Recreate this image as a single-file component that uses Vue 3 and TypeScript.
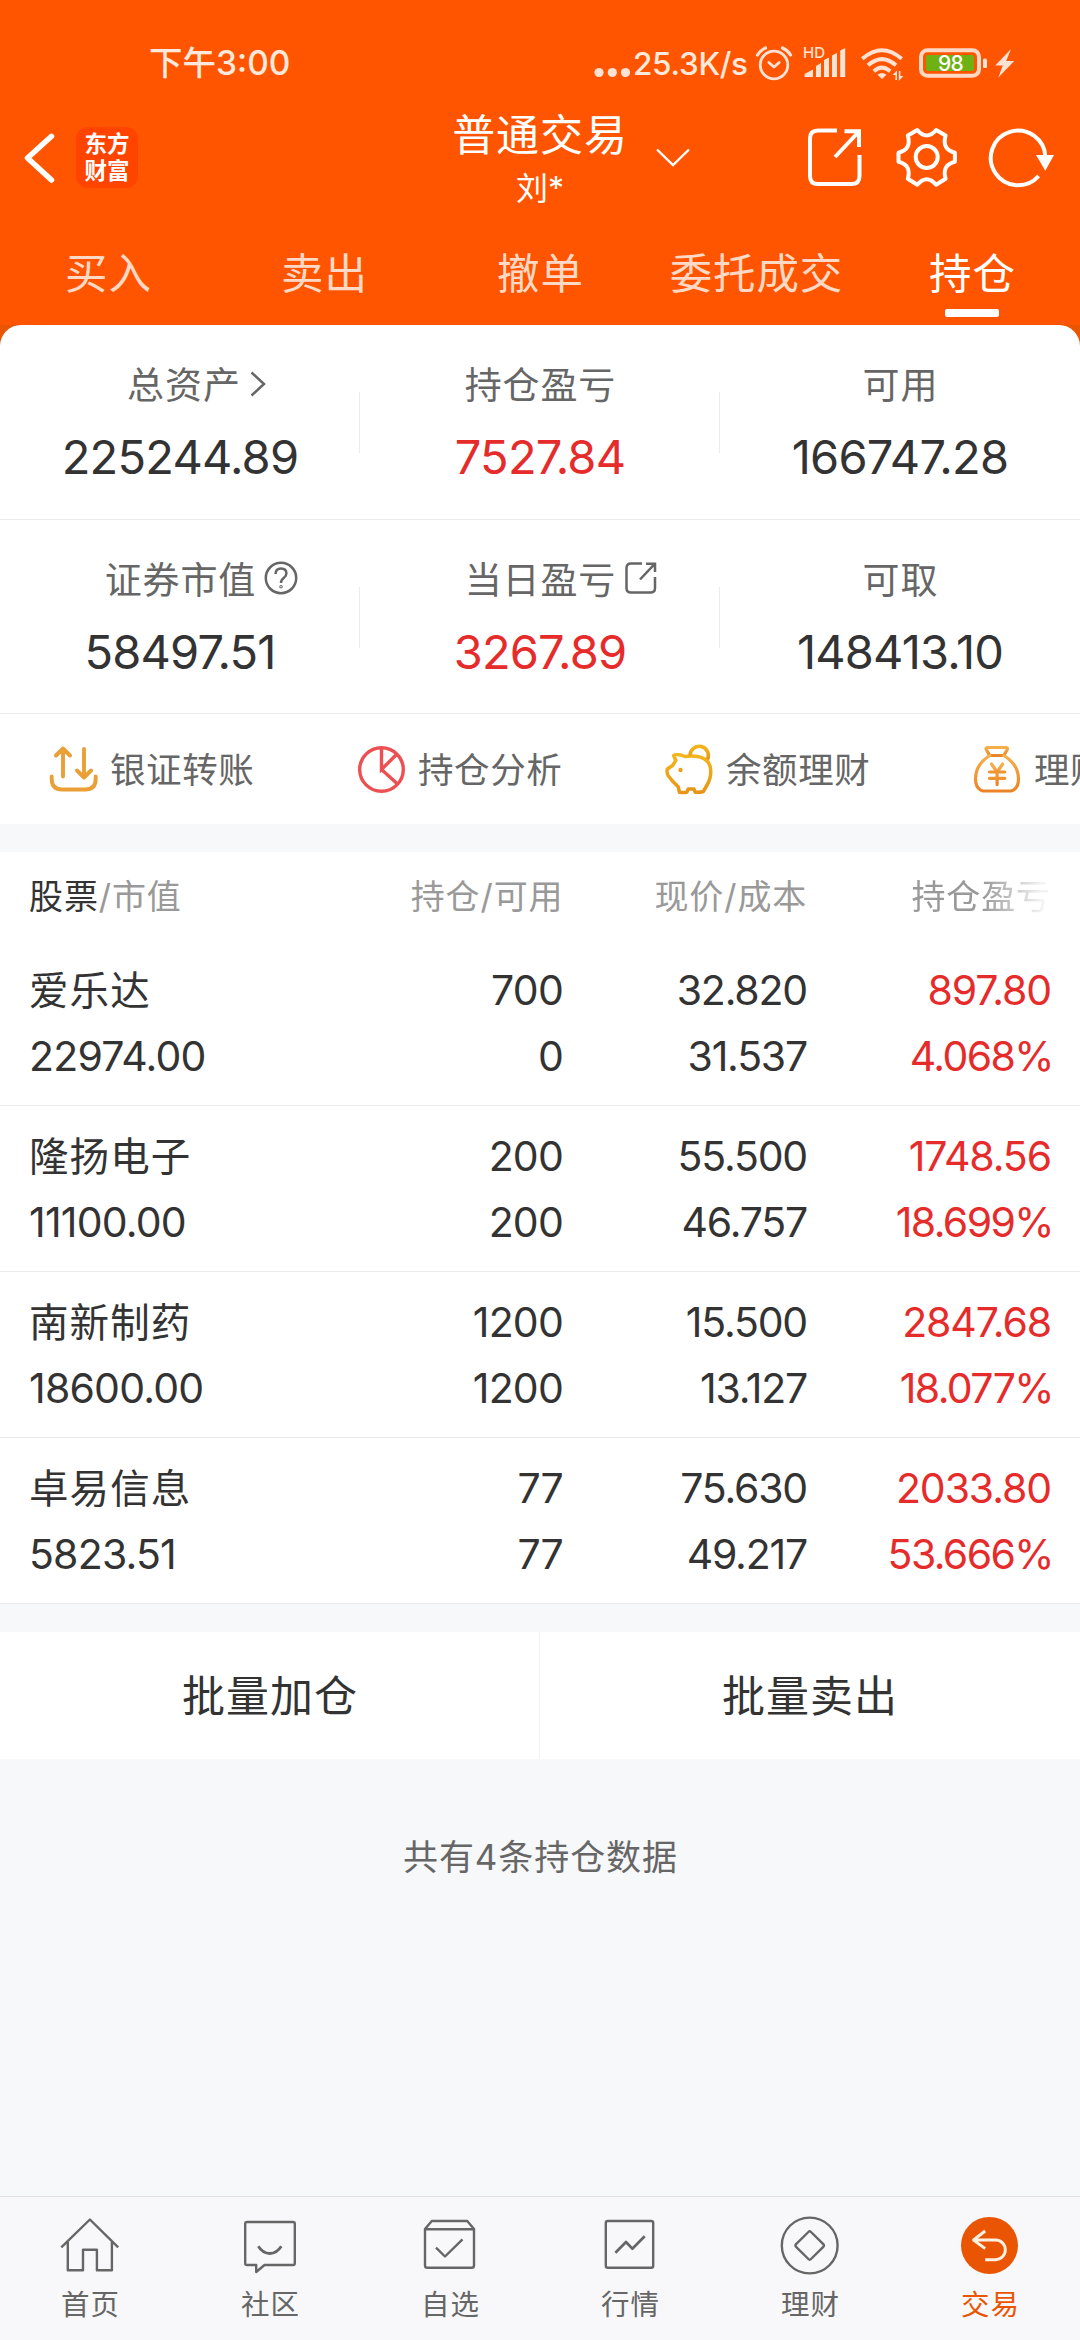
<script setup lang="ts">
interface Stat {
  label: string
  value: string
  icon?: 'chevron' | 'help' | 'export'
  up?: boolean
}

interface Holding {
  name: string
  marketValue: string
  amount: string
  available: string
  price: string
  cost: string
  profit: string
  ratio: string
}

const tabs: string[] = ['买入', '卖出', '撤单', '委托成交', '持仓']
const activeTab = '持仓'

const statRows: Stat[][] = [
  [
    { label: '总资产', value: '225244.89', icon: 'chevron' },
    { label: '持仓盈亏', value: '7527.84', up: true },
    { label: '可用', value: '166747.28' },
  ],
  [
    { label: '证券市值', value: '58497.51', icon: 'help' },
    { label: '当日盈亏', value: '3267.89', icon: 'export', up: true },
    { label: '可取', value: '148413.10' },
  ],
]

const holdings: Holding[] = [
  { name: '爱乐达', marketValue: '22974.00', amount: '700', available: '0', price: '32.820', cost: '31.537', profit: '897.80', ratio: '4.068%' },
  { name: '隆扬电子', marketValue: '11100.00', amount: '200', available: '200', price: '55.500', cost: '46.757', profit: '1748.56', ratio: '18.699%' },
  { name: '南新制药', marketValue: '18600.00', amount: '1200', available: '1200', price: '15.500', cost: '13.127', profit: '2847.68', ratio: '18.077%' },
  { name: '卓易信息', marketValue: '5823.51', amount: '77', available: '77', price: '75.630', cost: '49.217', profit: '2033.80', ratio: '53.666%' },
]
</script>

<template>
  <div class="screen">
    <header class="top">
      <div class="status">
        <span class="clock">下午3:00</span>
        <div class="status-right">
          <svg class="dots" width="36" height="30" viewBox="0 0 36 30"><circle cx="5" cy="23.5" r="4.6" /><circle cx="18.3" cy="23.5" r="4.6" /><circle cx="31.5" cy="23.5" r="4.6" /></svg>
          <span class="speed">25.3K/s</span>
          <svg class="sys" width="276" height="40" viewBox="750 44 276 40">
            <g fill="none" stroke="#ffe2d4" stroke-width="2.8" stroke-linecap="round" stroke-linejoin="round">
              <circle cx="774" cy="65" r="13.8" />
              <path d="M768.8 62.5l5.2 4.5 5.2-4.5" />
              <path d="M757.5 55q3-5 8-7M790.5 55q-3-5-8-7" stroke-width="3.2" />
            </g>
            <text x="803" y="58.3" class="hd">HD</text>
            <g fill="#ffe2d4">
              <path d="M804.5 77v-3l8.5-4.5V77zM816 77V66l5-3v14zM824 77V60l5-2.6V77zM832 77V55.5l5-2.5V77zM840.2 77V50.5l5-2.5V77z" />
              <path d="M882 79l-4.5-4.200q4.500-3.600 9 0zM892.500 75l4.500-4.500V80h-1.600v-5zM898.800 71h1.600v5h3l-4.600 5z" />
              <path d="M1011 49l-15.800 16.500h7.600L998.300 77.500 1014.300 61h-8.100z" />
              <rect x="983" y="58.500" width="4" height="9.500" rx="1.500" />
            </g>
            <g fill="none" stroke="#ffe2d4" stroke-width="3.900">
              <path d="M862.300 58.800q19.700-17.200 39.400 0M868 65.300q14-12.400 28 0M873.800 71.300q8.200-7.400 16.400 0" />
            </g>
            <rect x="921" y="50.200" width="58" height="25.600" rx="6.500" fill="none" stroke="#ffd9c5" stroke-width="4" />
            <rect x="926" y="55" width="48" height="16" rx="2" fill="#6fb012" />
            <text x="950.500" y="70.800" text-anchor="middle" class="bat">98</text>
          </svg>
        </div>
      </div>

      <div class="titlebar">
        <div class="side left">
          <svg width="36" height="56" viewBox="22 130 36 56"><path d="M51.500 136.300L27.500 158l24 22" fill="none" stroke="#fff" stroke-width="5.500" stroke-linecap="round" stroke-linejoin="round" /></svg>
          <div class="logo"><span>东方</span><span>财富</span></div>
        </div>
        <div class="titles">
          <div class="title">普通交易</div>
          <div class="account">刘*</div>
        </div>
        <div class="side right">
          <svg class="down" width="36" height="20" viewBox="0 0 36 20"><path d="M2 2.500l16 15.500 16-15.500" fill="none" stroke="#fff" stroke-width="2.400" /></svg>
          <svg width="270" height="64" viewBox="800 126 270 64" fill="none" stroke="#fff" stroke-width="4">
            <path d="M835 130.500H816q-8 0-8 8V176q0 8 8 8h33.500q8 0 8-8v-21" />
            <path d="M842.500 131.200H857V147M856 132.500l-23 24.500" />
            <circle cx="924.700" cy="157" r="11" />
            <path stroke-linejoin="round" d="M915.300 130q9.400 11 18.800 0l9.500 5.500q-4 14 9.300 17.200v9q-13.300 3.300-9.300 17l-9.500 6q-9.400-11-18.800 0l-9.500-6q4-13.700-9.300-17v-9q13.300-3.200 9.300-17.200z" />
            <path d="M1036.600 176A27.300 27.300 0 1 1 1043.400 157" />
            <path d="M1034 155h18l-8.700 15.800z" fill="#fff" stroke="none" />
          </svg>
        </div>
      </div>

      <nav class="tabs">
        <div v-for="tab in tabs" :key="tab" class="tab" :class="{ active: tab === activeTab }">
          <span>{{ tab }}</span><i v-if="tab === activeTab"></i>
        </div>
      </nav>
    </header>

    <section class="card">
      <div v-for="(row, r) in statRows" :key="r" class="stat-row">
        <div v-for="s in row" :key="s.label" class="stat">
          <div class="stat-label" :class="s.icon">
            <span>{{ s.label }}</span>
            <svg v-if="s.icon === 'chevron'" width="18" height="28" viewBox="0 0 18 28"><path d="M2.500 2.500L15 14 2.500 25.500" /></svg>
            <svg v-else-if="s.icon === 'help'" width="34" height="34" viewBox="0 0 34 34"><circle cx="17" cy="17" r="15.200" /><path d="M11.600 13q0-5.500 5.400-5.500t5.400 5q0 2.500-2.700 4.500-2.700 2-2.700 5" /><circle cx="17" cy="25.800" r=".5" /></svg>
            <svg v-else-if="s.icon === 'export'" width="34" height="34" viewBox="0 0 34 34"><path d="M18 2.500H7q-4.500 0-4.500 4.500v20q0 4.500 4.500 4.500h19.500q4.500 0 4.500-4.500V16M22 2.700h9V11M30.500 3.200L16 18.500" /></svg>
          </div>
          <div class="stat-value" :class="{ up: s.up }">{{ s.value }}</div>
        </div>
      </div>

      <div class="actions">
        <div class="action">
          <svg width="60" height="60" viewBox="42 738 60 60" fill="none" stroke="#eb9f37" stroke-width="3.900" stroke-linecap="round" stroke-linejoin="round">
            <path d="M63 775.500V748M56 754.500l7-7 7 7M84 748v27.500M77 769.500l7 7 7-7M51.700 775.500v2.500q0 10.500 10.500 10.500h23q10.500 0 10.500-10.500v-2.500" />
          </svg>
          <span>银证转账</span>
        </div>
        <div class="action">
          <svg width="60" height="60" viewBox="350 738 60 60" fill="none" stroke="#ec5052" stroke-width="3.400">
            <circle cx="381.500" cy="768.500" r="21.800" /><path d="M381.500 747v21.500l15.500-15.500M381.500 768.500l15.500 14" />
          </svg>
          <span>持仓分析</span>
        </div>
        <div class="action">
          <svg width="60" height="60" viewBox="-2 -2 60 60" fill="none" stroke="url(#gold)" stroke-width="3.500" stroke-linejoin="round">
            <defs><linearGradient id="gold" x1="0" y1="0" x2="0" y2="1"><stop offset="0" stop-color="#f4b51c" /><stop offset="1" stop-color="#e89516" /></linearGradient></defs>
            <path d="M13.600 14.500q1-1.300 7.500-.5l3.500 1.500q7-1 13 0 13 2.500 13.200 14.500 0 8-4 14.500l-3.500 6q-3 1-8 .7l-1.400-3.200h-5.700l-1.300 3.200q-4 .5-7.500 0l-1.200-5.500-6-6L8 34.500q-1.500-4-.7-6.500l5.300-3.500 3.200-5.200z" />
            <path d="M30 14.500a9.200 9.200 0 1 1 17.500 4" /><circle cx="20.500" cy="29" r="2.200" fill="#eba01b" stroke="none" />
          </svg>
          <span>余额理财</span>
        </div>
        <div class="action">
          <svg width="60" height="60" viewBox="-2 -2 60 60" fill="none" stroke="url(#bag)" stroke-width="3.200" stroke-linejoin="round" stroke-linecap="round">
            <defs><linearGradient id="bag" x1="0" y1="0" x2="0" y2="1"><stop offset="0" stop-color="#f5b04c" /><stop offset="1" stop-color="#ea8426" /></linearGradient></defs>
            <path d="M19.500 6.500h18.600q2 0 1.200 2l-3.500 6H21.700l-3.500-6q-.8-2 1.300-2z" />
            <path d="M21.700 14.500Q7.500 23.500 7.500 38q0 8 5 11 1.500 1 3 1h27q1.500 0 3-1 5-3 5-11 0-14.500-14.700-23.500" />
            <path d="M23.500 23l5.600 8 5.600-8M29.100 31v12.500" /><path d="M21.500 31l15.300.01M21.500 37.300l15.300.01" stroke="#ee9430" />
          </svg>
          <span>理财</span>
        </div>
      </div>
    </section>

    <section class="table">
      <div class="thead">
        <div class="c1"><b>股票</b>/市值</div>
        <div class="c2">持仓/可用</div>
        <div class="c3">现价/成本</div>
        <div class="c4 faded">持仓盈亏</div>
      </div>
      <div v-for="h in holdings" :key="h.name" class="trow">
        <div class="c1"><p class="name">{{ h.name }}</p><p>{{ h.marketValue }}</p></div>
        <div class="c2"><p>{{ h.amount }}</p><p>{{ h.available }}</p></div>
        <div class="c3"><p>{{ h.price }}</p><p>{{ h.cost }}</p></div>
        <div class="c4 up"><p>{{ h.profit }}</p><p class="ratio">{{ h.ratio }}</p></div>
      </div>
    </section>

    <section class="batch">
      <div>批量加仓</div>
      <div>批量卖出</div>
    </section>

    <p class="summary">共有4条持仓数据</p>

    <footer class="nav">
      <div class="nav-item">
        <svg viewBox="0 0 64 64"><path d="M3.300 32.300L31.900 4.500l28.300 27.800M9.800 27v28.300H25V34.700h13.900v20.600h15V27" /></svg>
        <span>首页</span>
      </div>
      <div class="nav-item">
        <svg viewBox="0 0 64 64"><path d="M9 7h46q1.800 0 1.800 1.800v39.400q0 1.800-1.800 1.800H26.500l-8.300 7V50H9q-1.800 0-1.800-1.800V8.800Q7.200 7 9 7z" /><path d="M20.300 31.300q4.500 7.200 11.500 7.200t11.500-7.200" stroke-width="2.800" /></svg>
        <span>社区</span>
      </div>
      <div class="nav-item">
        <svg viewBox="0 0 64 64"><path d="M7 14l6.800-8h35.400L56 14v36.500q0 2.300-2.300 2.300H9.300Q7 52.800 7 50.500zM7 14.300h49M18 32.700l9 8.800 17.500-17.200" /></svg>
        <span>自选</span>
      </div>
      <div class="nav-item">
        <svg viewBox="0 0 64 64"><rect x="7.800" y="6" width="47.400" height="46.800" rx="2" /><path d="M17.400 37.700L28 27l6.300 6.700 12.400-12.400" stroke-width="2.700" /></svg>
        <span>行情</span>
      </div>
      <div class="nav-item">
        <svg viewBox="0 0 64 64"><circle cx="31.700" cy="30.500" r="27.900" /><path d="M30.400 17q1.300-1.300 2.600 0l12.300 12.200q1.300 1.300 0 2.600L33 44q-1.300 1.300-2.600 0L18.100 31.800q-1.300-1.300 0-2.600z" /></svg>
        <span>理财</span>
      </div>
      <div class="nav-item current">
        <svg viewBox="0 0 64 64"><circle cx="31.500" cy="30.400" r="28.500" fill="#ea5504" stroke="none" /><path d="M27.200 16L15.500 25l11.700 8.700M15.500 25h22a9.800 9.800 0 0 1 0 19.700H27.200" stroke="#fff1e2" stroke-width="2.900" /></svg>
        <span>交易</span>
      </div>
    </footer>
  </div>
</template>

<style>
body { margin: 0; background: #f7f8fa; }
</style>

<style scoped>
.screen {
  width: 1080px;
  height: 2340px;
  display: flex;
  flex-direction: column;
  overflow: hidden;
  background: #f7f8fa;
  color: #333;
  font-family: Inter, "Noto Sans CJK SC", sans-serif;
}
p { margin: 0; }
svg { display: block; flex: none; }
.top { height: 325px; background: #ff5500; color: #fff; }
.status { height: 126px; display: flex; justify-content: space-between; color: #ffe8dc; }
.clock { margin-left: 149px; line-height: 127px; font-size: 33.500px; font-weight: 500; }
.status-right { display: flex; padding-top: 44px; }
.dots { fill: #ffe2d4; margin: 5px 3px 0 0; }
.speed { width: 117px; line-height: 39px; font-size: 31.500px; font-weight: 500; white-space: nowrap; letter-spacing: -.3px; }
.sys { margin-right: 54px; }
.hd { font: 500 15px Inter, sans-serif; fill: #ffe2d4; }
.bat { font: 500 21px Inter, sans-serif; fill: #fff; letter-spacing: -.8px; }
.titlebar { height: 96px; display: flex; justify-content: space-between; }
.side { width: 430px; display: flex; }
.left { padding-left: 22px; box-sizing: border-box; }
.left svg { margin-top: 4px; }
.logo {
  width: 62px; height: 61px; margin: 1px 0 0 18px; box-sizing: border-box; padding-top: 3px;
  display: flex; flex-direction: column; align-items: center;
  border-radius: 12px; background: #ff4400;
}
.logo span { font-size: 22.500px; line-height: 27px; font-weight: 700; }
.titles { text-align: center; }
.title { margin-top: -12px; font-size: 43px; line-height: 42px; letter-spacing: .9px; white-space: nowrap; }
.account { margin-top: 12px; font-size: 32px; line-height: 41px; }
.down { margin: 21px 111px 0 5px; }
.right { justify-content: flex-start; }
.tabs { height: 103px; display: flex; }
.tab {
  flex: 0 0 216px; height: 95px; display: flex; flex-direction: column; align-items: center;
  line-height: 104px; font-size: 42.500px; letter-spacing: .9px; color: #ffd9c6; text-indent: .9px;
}
.tab span { height: 87px; }
.tab.active { color: #fff; }
.tab i { width: 54px; height: 8px; border-radius: 2px; background: #fff; }
.card {
  flex: none; height: 499px; border-radius: 21px 21px 0 0; background: #fff;
  box-shadow: 0 0 0 21px #ea5504; clip-path: inset(0); overflow: hidden;
}
.stat-row { height: 194px; display: flex; border-bottom: 1px solid #ebebeb; }
.stat-row + .stat-row { height: 193px; }
.stat { flex: 1; display: flex; flex-direction: column; align-items: center; position: relative; }
.stat + .stat::before { content: ""; position: absolute; left: -1px; top: 67px; width: 1px; height: 61px; background: #ebebeb; }
.stat-label { height: 50px; margin-top: 36px; display: flex; align-items: center; font-size: 37px; letter-spacing: .9px; color: #666; text-indent: .9px; }
.stat-label span { line-height: 50px; }
.stat-label svg { fill: none; stroke: #666; stroke-width: 2.500; }
.chevron svg { margin: -5px -18px 0 8px; }
.chevron { margin-left: 15px; }
.help svg, .export svg { margin: -7px -42px 0 8px; }
.stat-value { margin-top: 16px; line-height: 60px; font-size: 47px; letter-spacing: -.8px; }
.up { color: #e62b2b; }
.actions { height: 110px; display: flex; }
.action { flex: 0 0 308px; display: flex; align-items: center; font-size: 35.500px; letter-spacing: .6px; color: #666; white-space: nowrap; }
.action svg { margin-left: 42px; }
.action span { margin: -4px 0 0 8px; }
.table { flex: none; margin-top: 28px; background: #fff; }
.thead { height: 88px; display: flex; line-height: 89px; padding: 0 30px 0 29px; font-size: 34px; letter-spacing: .9px; color: #999; }
.thead b { color: #333; font-weight: 400; }
.thead div + div { position: relative; left: 1px; }
.c1 { width: 233px; }
.c2 { width: 301px; text-align: right; }
.c3 { width: 244px; text-align: right; }
.c4 { width: 244px; text-align: right; }
.faded { -webkit-mask-image: linear-gradient(90deg, #000 72%, rgba(0, 0, 0, .12) 96%); mask-image: linear-gradient(90deg, #000 72%, rgba(0, 0, 0, .12) 96%); }
.trow { height: 165px; display: flex; padding: 0 29px; border-bottom: 1px solid #ebebeb; font-size: 41px; letter-spacing: -.8px; }
.trow p { height: 66px; line-height: 66px; white-space: nowrap; }
.trow p:first-child { margin-top: 17px; }
.trow .c3 { letter-spacing: -1.200px; }
.trow .c4 { letter-spacing: -1.100px; }
.trow .ratio { letter-spacing: -1.600px; margin-right: -2px; }
.trow .name { font-size: 39.500px; letter-spacing: 1.100px; line-height: 68px; }
.batch { flex: none; height: 127px; margin-top: 28px; display: flex; background: #fff; }
.batch div { flex: 1; text-align: center; line-height: 129px; font-size: 43px; letter-spacing: 1px; }
.batch div + div { border-left: 1px solid #f3f3f3; margin-left: -1px; }
.summary { margin-top: 73px; text-align: center; line-height: 50px; font-size: 35px; letter-spacing: .9px; text-indent: .9px; color: #666; }
.nav { height: 143px; margin-top: auto; display: flex; border-top: 1px solid #e0e0e2; background: #f8f8fa; }
.nav-item { flex: 1; display: flex; flex-direction: column; align-items: center; color: #666; font-size: 28.500px; letter-spacing: .8px; text-indent: .8px; }
.nav-item svg { width: 64px; height: 64px; margin-top: 18px; fill: none; stroke: #666; stroke-width: 2.400; stroke-linejoin: round; }
.nav-item span { margin-top: 6px; line-height: 40px; }
.current { color: #ea5504; }
</style>
